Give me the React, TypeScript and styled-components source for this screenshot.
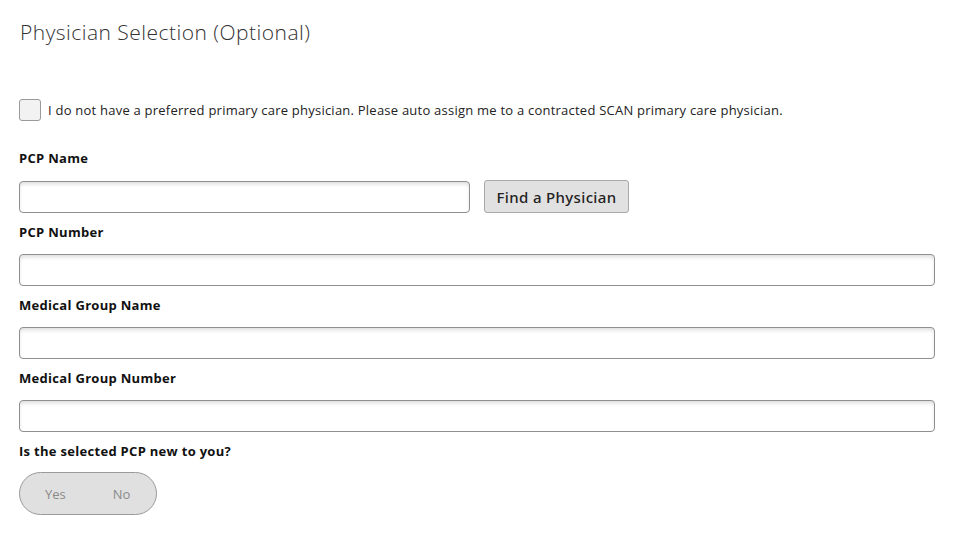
import React from "react";
import styled, { createGlobalStyle } from "styled-components";

const Global = createGlobalStyle`
  html, body { margin: 0; padding: 0; background: #ffffff; }
  body { font-family: "Open Sans", "Noto Sans", sans-serif; color: #222; }
  * { box-sizing: border-box; }
`;

const Page = styled.div`
  width: 972px;
  padding: 17px 37px 0 19px;
  display: flex;
  flex-direction: column;
`;

const Title = styled.h1`
  margin: 0 0 0 1px;
  font-size: 21px;
  font-weight: 300;
  color: #333;
  line-height: 30px;
  letter-spacing: 0.48px;
`;

const CheckRow = styled.label`
  margin-top: 52px;
  display: flex;
  align-items: center;
  gap: 7px;
  height: 22px;
`;

const Box = styled.span`
  width: 22px;
  height: 22px;
  border: 1px solid #9a9a9a;
  border-radius: 3px;
  background: #f2f2f2;
  flex: none;
`;

const CheckText = styled.span`
  font-size: 13px;
  color: #222;
  letter-spacing: 0.23px;
`;

const Label = styled.div<{ $top: number }>`
  margin-top: ${(p) => p.$top}px;
  font-size: 13px;
  font-weight: 700;
  color: #111;
  line-height: 18px;
  letter-spacing: 0.3px;
`;

const Row = styled.div`
  margin-top: 13px;
  display: flex;
  align-items: center;
  gap: 14px;
`;

const Input = styled.div<{ $w?: number }>`
  width: ${(p) => (p.$w ? `${p.$w}px` : "100%")};
  height: 32px;
  border: 1px solid #8f8f8f;
  border-radius: 4px;
  background: #fff;
  box-shadow: inset 0 3px 4px -1px rgba(0, 0, 0, 0.14);
`;

const FullInput = styled(Input)`
  margin-top: 13px;
`;

const FindButton = styled.button`
  height: 33px;
  width: 145px;
  border: 1px solid #a9a9a9;
  border-radius: 3px;
  background: #e1e1e1;
  font-family: "Noto Sans", "Open Sans", sans-serif;
  font-size: 15px;
  font-weight: 500;
  color: #222;
  padding: 0;
  letter-spacing: 0.35px;
`;

const Toggle = styled.div`
  margin-top: 12px;
  width: 138px;
  height: 43px;
  border: 1px solid #9a9a9a;
  border-radius: 22px;
  background: #e0e0e0;
  display: flex;
  align-items: center;
  padding-left: 25px;
  gap: 47px;
`;

const ToggleOpt = styled.span`
  font-size: 13px;
  color: #8a8a8a;
`;

export default function App() {
  return (
    <>
      <Global />
      <Page>
        <Title>Physician Selection (Optional)</Title>
        <CheckRow>
          <Box />
          <CheckText>
            I do not have a preferred primary care physician. Please auto assign me to a contracted SCAN primary care physician.
          </CheckText>
        </CheckRow>
        <Label $top={28}>PCP Name</Label>
        <Row>
          <Input $w={451} />
          <FindButton>Find a Physician</FindButton>
        </Row>
        <Label $top={10}>PCP Number</Label>
        <FullInput />
        <Label $top={10}>Medical Group Name</Label>
        <FullInput />
        <Label $top={10}>Medical Group Number</Label>
        <FullInput />
        <Label $top={10}>Is the selected PCP new to you?</Label>
        <Toggle>
          <ToggleOpt>Yes</ToggleOpt>
          <ToggleOpt>No</ToggleOpt>
        </Toggle>
      </Page>
    </>
  );
}
